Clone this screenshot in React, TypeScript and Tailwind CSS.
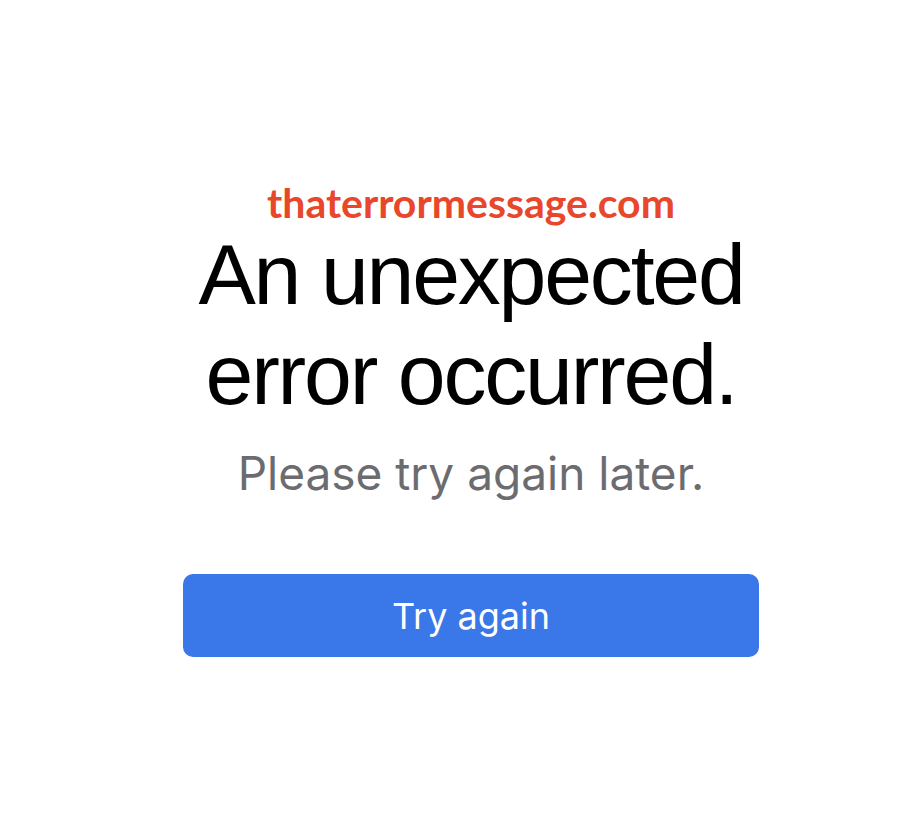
export default function App() {
  return (
    <div className="min-h-screen w-full bg-white flex flex-col items-center pl-[19px]">
      <div className="w-[576px] flex flex-col items-center pt-[180px]">
        <div className="text-[41px] leading-[46px] font-bold text-[#e8472b] font-['Lato','Open_Sans',sans-serif]">
          thaterrormessage.com
        </div>
        <h1 className="-mt-[2px] text-center text-[86px] leading-[100px] tracking-[-2.2px] text-black font-['Liberation_Sans',Arial,sans-serif]">
          An unexpected
          <br />
          error occurred.
        </h1>
        <p className="mt-[21px] text-[46px] leading-[56px] text-[#6c6c70] font-['Inter',sans-serif]">
          Please try again later.
        </p>
        <button className="mt-[73px] w-[576px] h-[83px] rounded-[10px] bg-[#3a77e8] text-white text-[36px] font-['Inter',sans-serif]">
          Try again
        </button>
      </div>
    </div>
  );
}
